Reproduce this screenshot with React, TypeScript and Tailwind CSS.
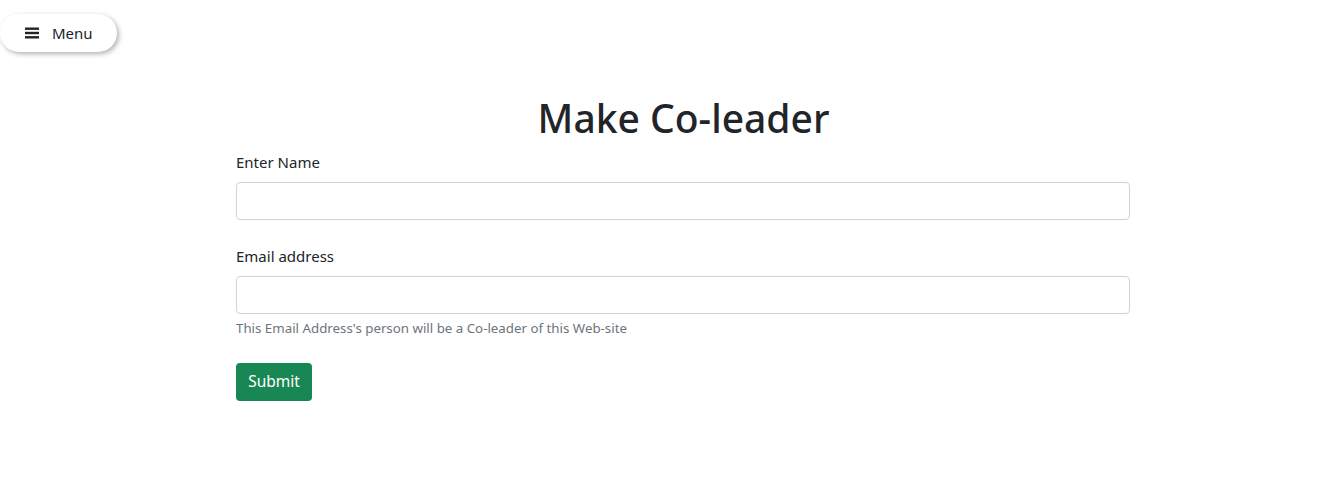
import React from 'react';

const App: React.FC = () => {
  return (
    <div className="min-h-[491px] bg-white text-[#212529] font-['Noto_Sans',sans-serif]">
      <div className="pt-[14px]">
        <button className="flex items-center h-[38px] w-[117px] pl-[25px] gap-[13px] bg-white rounded-full shadow-[2px_2px_5px_rgba(0,0,0,0.3)] text-[15px] text-[#212529]">
          <svg width="14" height="12" viewBox="0 0 14 12">
            <rect x="0" y="0.5" width="14" height="2.4" fill="#212529" />
            <rect x="0" y="4.8" width="14" height="2.4" fill="#212529" />
            <rect x="0" y="9.1" width="14" height="2.4" fill="#212529" />
          </svg>
          <span>Menu</span>
        </button>
      </div>

      <div className="ml-[236px] w-[894px] mt-[42px]">
        <h1 className="text-center text-[39px] leading-[48px] font-medium mb-2 pl-[1px]">Make Co-leader</h1>
        <form>
          <div className="mb-6">
            <label className="block text-[15px] leading-6 mb-2">Enter Name</label>
            <input type="text" className="block w-full h-[38px] border border-[#ced4da] rounded-[4px] px-3" />
          </div>
          <div className="mb-6">
            <label className="block text-[15px] leading-6 mb-2">Email address</label>
            <input type="email" className="block w-full h-[38px] border border-[#ced4da] rounded-[4px] px-3" />
            <div className="mt-1 text-[13.3px] leading-[21px] text-[#6c757d]">This Email Address's person will be a Co-leader of this Web-site</div>
          </div>
          <button type="button" className="h-[38px] w-[76px] bg-[#198754] text-white rounded-[4px] text-[15.5px]">Submit</button>
        </form>
      </div>
    </div>
  );
};

export default App;
